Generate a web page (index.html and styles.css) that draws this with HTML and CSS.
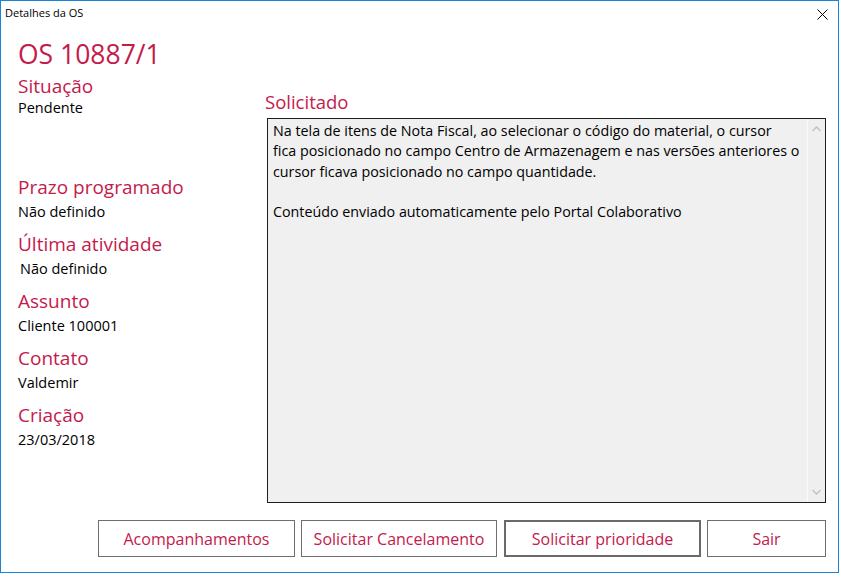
FILE: index.html
```html
<!DOCTYPE html>
<html lang="pt">
<head>
<meta charset="utf-8">
<title>Detalhes da OS</title>
<link rel="stylesheet" href="styles.css">
</head>
<body>
<div class="window">
  <div class="titlebar">
    <span class="title">Detalhes da OS</span>
    <span class="close">
      <svg width="11" height="11" viewBox="0 0 11 11"><path d="M0.5 0.5L10.5 10.5M10.5 0.5L0.5 10.5" stroke="#000" stroke-width="1" fill="none"/></svg>
    </span>
  </div>
  <div class="main">
    <div class="left">
      <h1 class="os">OS 10887/1</h1>
      <div class="field first">
        <div class="label">Situação</div>
        <div class="value">Pendente</div>
      </div>
      <div class="field">
        <div class="label">Prazo programado</div>
        <div class="value">Não definido</div>
      </div>
      <div class="field">
        <div class="label">Última atividade</div>
        <div class="value indent">Não definido</div>
      </div>
      <div class="field">
        <div class="label">Assunto</div>
        <div class="value">Cliente 100001</div>
      </div>
      <div class="field">
        <div class="label">Contato</div>
        <div class="value">Valdemir</div>
      </div>
      <div class="field">
        <div class="label">Criação</div>
        <div class="value">23/03/2018</div>
      </div>
    </div>
    <div class="right">
      <div class="label sol">Solicitado</div>
      <div class="textbox">
        <div class="text">
          <p>Na tela de itens de Nota Fiscal, ao selecionar o código do material, o cursor<br>fica posicionado no campo Centro de Armazenagem e nas versões anteriores o<br>cursor ficava posicionado no campo quantidade.</p>
          <p>Conteúdo enviado automaticamente pelo Portal Colaborativo</p>
        </div>
        <div class="scrollbar">
          <svg class="arrow" width="9" height="6" viewBox="0 0 9 6"><path d="M0.5 5L4.5 1L8.5 5" stroke="#c2c2c2" stroke-width="1.5" fill="none"/></svg>
          <svg class="arrow" width="9" height="6" viewBox="0 0 9 6"><path d="M0.5 1L4.5 5L8.5 1" stroke="#c2c2c2" stroke-width="1.5" fill="none"/></svg>
        </div>
      </div>
    </div>
  </div>
  <div class="buttons">
    <button class="btn w197">Acompanhamentos</button>
    <button class="btn w196">Solicitar Cancelamento</button>
    <button class="btn w197 focus">Solicitar prioridade</button>
    <button class="btn w119">Sair</button>
  </div>
</div>
</body>
</html>
```
FILE: styles.css
```css
* { box-sizing: border-box; }
html, body { margin: 0; padding: 0; background: #fff; }
body { font-family: "Open Sans", "Noto Sans", sans-serif; color: #000; }

.window {
  width: 839px;
  height: 573px;
  border: 1px solid #1883d7;
  background: #fff;
  display: flex;
  flex-direction: column;
}

.titlebar {
  height: 27px;
  display: flex;
  align-items: flex-start;
  justify-content: space-between;
  padding: 5px 10px 0 4px;
}
.title { font-size: 11px; line-height: 14px; }
.close { display: flex; width: 11px; height: 11px; margin-top: 3px; }

.main {
  display: flex;
  padding-left: 17px;
  padding-right: 12px;
  flex: 1;
}
.left { width: 249px; flex: none; }
.os {
  margin: 10px 0 4px;
  font-weight: normal;
  font-size: 26.5px;
  line-height: 32px;
  color: #c41a4c;
}
.label {
  font-size: 19px;
  line-height: 24px;
  color: #c41a4c;
}
.value {
  font-size: 14.5px;
  line-height: 20px;
  padding-top: 3px;
}
.value.indent { padding-left: 2px; }
.field { margin-bottom: 10px; }
.field.first { margin-bottom: 57px; }
.field.first .value { padding-top: 0; }

.right {
  flex: 1;
  display: flex;
  flex-direction: column;
  padding-top: 62px;
}
.label.sol { margin-left: -2px; margin-bottom: 4px; font-size: 18.5px; }
.textbox {
  height: 385px;
  border: 1px solid #1e1e1e;
  background: #f0f0f0;
  display: flex;
}
.text {
  flex: 1;
  padding: 2px 0 0 5px;
  font-size: 14.3px;
  line-height: 20.3px;
  white-space: nowrap;
  overflow: hidden;
}
.text p { margin: 0 0 20.3px; }
.scrollbar {
  width: 18px;
  flex: none;
  border-left: 1px solid #fafafa;
  background: #efefef;
  display: flex;
  flex-direction: column;
  justify-content: space-between;
  align-items: center;
  padding: 7px 0 7px;
}

.buttons {
  display: flex;
  justify-content: flex-end;
  gap: 6px;
  padding: 0 12px 15px 0;
}
.btn {
  height: 37px;
  border: 1px solid #6e6e6e;
  background: #fff;
  color: #c41a4c;
  font-family: "Open Sans", "Noto Sans", sans-serif;
  font-size: 16px;
  padding: 0;
}
.btn.focus { border: 2px solid #6a6a6a; margin-left: 1px; }
.w197 { width: 197px; }
.w196 { width: 196px; }
.w119 { width: 119px; }
```
